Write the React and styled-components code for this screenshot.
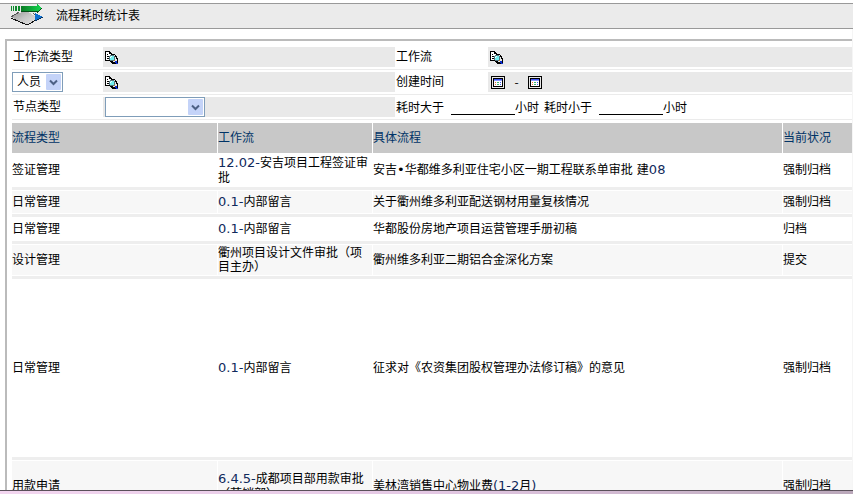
import React, { useState } from 'react';
import styled, { createGlobalStyle } from 'styled-components';

const GlobalStyle = createGlobalStyle`
  * {
    box-sizing: border-box;
  }

  body {
    margin: 0;
    background: #fff;
    color: #000;
    font: 12px/14px 'Noto Sans CJK SC', sans-serif;
  }
`;

const Page = styled.div`
  display: flex;
  flex-direction: column;
  height: 100vh;
  padding-top: 3px;
  overflow: hidden;
`;

const TitleBar = styled.header`
  display: flex;
  flex: none;
  align-items: center;
  gap: 12px;
  height: 26px;
  padding: 0 10px 2px;
  border-top: 1px solid #999;
  border-bottom: 1px solid #999;
  background: #ebebeb;
`;

const Title = styled.h1`
  margin: 0;
  font-size: 12px;
  font-weight: 400;
`;

const Content = styled.main`
  flex: 1;
  min-height: 0;
  padding: 10px 0 0 5px;
  border-right: 1px solid #f5f5f5;
  overflow: hidden;
`;

const Panel = styled.div`
  min-height: 100%;
  padding: 4px 0 0 4px;
  border-top: 2px solid #bbb;
  border-left: 2px solid #bbb;
`;

const FilterRow = styled.div`
  display: grid;
  grid-template-columns: 91px 292px 93px 1fr;
  margin-left: 1px;
  padding: 2px 0;
  border-bottom: 1px solid #ebebeb;
`;

const LabelCell = styled.div`
  display: flex;
  align-items: center;
  height: 20px;
  padding: 0 0 2px 1px;
`;

const PickerCell = styled.div`
  display: flex;
  align-items: center;
  height: 20px;
`;

const Field = styled.div`
  display: flex;
  align-items: center;
  height: 20px;
  padding-left: ${({ $inset }) => $inset || '2px'};
  background: #e9e9e9;
`;

const Range = styled.div`
  display: flex;
  grid-column: span 2;
  align-items: center;
  padding-left: 1px;
`;

const IconButton = styled.button`
  display: block;
  flex: none;
  padding: 0;
  border: 0;
  background: none;

  svg {
    display: block;
  }
`;

const Dash = styled.span`
  width: 23px;
  text-align: center;
`;

const SelectBox = styled.span`
  position: relative;
  display: block;
  width: ${({ $width }) => $width};
  height: 20px;

  svg {
    position: absolute;
    top: 2px;
    right: 2px;
    pointer-events: none;
  }
`;

const NativeSelect = styled.select`
  appearance: none;
  width: 100%;
  height: 20px;
  padding: 0 4px 2px;
  border: 1px solid #7f9db9;
  border-radius: 0;
  background: #fff;
  color: #000;
  font: inherit;
`;

const HourInput = styled.input`
  width: 64px;
  height: 16px;
  margin-left: 7px;
  padding: 0;
  border: 0;
  border-bottom: 1px solid #000;
  background: none;
  font: inherit;
`;

const HourUnit = styled.span`
  margin-right: 5px;
`;

const DataTable = styled.table`
  width: calc(100% + 1px);
  margin-top: 2px;
  border-spacing: 1px;
  table-layout: fixed;
`;

const Col = styled.col`
  width: ${({ $width }) => $width};
`;

const HeadCell = styled.th`
  height: 30px;
  padding: 0 0 2px;
  background: #c8c8c8;
  color: #003366;
  font-weight: 400;
  text-align: left;
`;

const DataRow = styled.tr`
  height: ${({ $height }) => $height};
  background: ${({ $shaded }) => ($shaded ? '#f7f7f7' : '#fff')};
`;

const DataCell = styled.td`
  padding: 0 0 2px;
`;

const RuleCell = styled.td`
  height: 3px;
  padding: 0;
  background: #eee;
`;

const Latin = styled.span`
  color: ${({ $symbol }) => ($symbol ? '#000' : '#102a5c')};
  font-family: 'DejaVu Sans', sans-serif;
  font-size: 13px;
  line-height: 14px;
`;

const StatusEdge = styled.footer`
  flex: none;
  height: 4px;
  border-top: 1px solid #5a505a;
  background: linear-gradient(90deg, #f3d6f0, #e4c8e4 50%, #baa8ba);
`;

const rows = [
  { type: '签证管理', flow: '12.02-安吉项目工程签证审批', detail: '安吉•华都维多利亚住宅小区一期工程联系单审批 建08', status: '强制归档', height: '32px' },
  { type: '日常管理', flow: '0.1-内部留言', detail: '关于衢州维多利亚配送钢材用量复核情况', status: '强制归档', height: '22px' },
  { type: '日常管理', flow: '0.1-内部留言', detail: '华都股份房地产项目运营管理手册初稿', status: '归档', height: '22px' },
  { type: '设计管理', flow: '衢州项目设计文件审批（项目主办）', detail: '衢州维多利亚二期铝合金深化方案', status: '提交', height: '30px' },
  { type: '日常管理', flow: '0.1-内部留言', detail: '征求对《农资集团股权管理办法修订稿》的意见', status: '强制归档', height: '176px' },
  { type: '用款申请', flow: '6.4.5-成都项目部用款审批（营销部）', detail: '美林湾销售中心物业费(1-2月)', status: '强制归档', height: '50px' },
];

// digits, ascii punctuation and the bullet are set in the latin face
const MixedText = ({ children }) =>
  children.split(/([0-9.()\s•-]+)/).map((part, i) =>
    i % 2 ? (
      <Latin key={i} $symbol={part === '•'}>
        {part}
      </Latin>
    ) : (
      part
    ),
  );

const FlowIcon = () => (
  <svg width="34" height="24" viewBox="0 0 34 24" shapeRendering="crispEdges" aria-hidden="true">
    <defs>
      <linearGradient id="plate" x1="0" y1="0" x2="1" y2="1">
        <stop offset="0" stopColor="#8c8c8c" />
        <stop offset="0.5" stopColor="#c4c4c4" />
        <stop offset="1" stopColor="#e8e8e8" />
      </linearGradient>
      <linearGradient id="arrow">
        <stop offset="0" stopColor="#0b7a25" />
        <stop offset="1" stopColor="#12d84e" />
      </linearGradient>
    </defs>
    <path d="M1 14 16 7 27 15 17 22Z" fill="url(#plate)" />
    <path d="M1 15 17 22 28 16" fill="none" stroke="#111" strokeWidth="1" />
    <path d="M1 14 9 9M23 10 29 15" fill="none" stroke="#555" strokeWidth="1" />
    <path d="M1 3h1v5H1zM3 3h1v5H3zM5 3h2v5H5zM8 3h2v5H8z" fill="#0d8a2c" />
    <path d="M11 3h16V1l5 4-5 5V8H11z" fill="url(#arrow)" />
    <path d="M11 8h16v2l5-5" fill="none" stroke="#064d18" />
    <path d="M25 10 33 14 25 18Z" fill="#0d6fd0" />
    <path d="M25 18 33 14" fill="none" stroke="#06305c" />
  </svg>
);

const LookupIcon = () => (
  <svg width="13" height="13" viewBox="0 0 13 13" shapeRendering="crispEdges" aria-hidden="true">
    <path d="M0 0h5v1h1v1h1v8H0z" fill="#000" />
    <path d="M1 1h3v2h2v6H1z" fill="#fff" />
    <path d="M2 3h1v1H2zM2 5h2v1H2zM2 7h2v1H2z" fill="#000" />
    <path d="M7 3h3v1h1v1h1v2h1v6H7v-1H6v-1H5v-1h2z" fill="#000" />
    <path d="M8 4h2v2h1v2h1v3H8z" fill="#e8e8e8" />
    <path d="M5 4h4v1h1v4H9v1H5V9H4V5h1z" fill="#55757d" />
    <path d="M5 5h4v4H5z" fill="#70f0f0" />
    <path d="M6 5h1v1H6zM5 6h1v1H5z" fill="#fff" />
    <path d="M9 9h1v1H9z" fill="#c08030" />
    <path d="M10 10h2v2h1v1h-2v-1h-1z" fill="#0a2cd0" />
  </svg>
);

const CalendarIcon = () => (
  <svg width="14" height="13" viewBox="0 0 14 13" shapeRendering="crispEdges" aria-hidden="true">
    <path d="M0 0h14v13H0z" fill="#000" />
    <path d="M1 1h12v11H1z" fill="#e9e9e9" />
    <path d="M2 2h10v9H2z" fill="#000" />
    <path d="M3 3h8v7H3z" fill="#fff" />
    <path d="M3 3h8v1H3z" fill="#3c50f0" />
    <path d="M3 4h8v1H3z" fill="#8c9cff" />
    <path d="M4 6h1v1H4zM4 8h1v1H4z" fill="#f07040" />
    <path d="M6 6h2v1H6zM6 8h2v1H6z" fill="#40b870" />
    <path d="M9 6h1v1H9zM9 8h1v1H9z" fill="#4060f0" />
  </svg>
);

const SelectArrow = () => (
  <svg width="15" height="16" viewBox="0 0 15 16" aria-hidden="true">
    <rect width="15" height="16" rx="1" fill="#c4d3f8" />
    <path d="M4 6.500 7.500 10 11 6.500" fill="none" stroke="#4d6185" strokeWidth="2" />
  </svg>
);

const Select = ({ width, label, id, children }) => (
  <SelectBox $width={width}>
    <NativeSelect id={id} aria-label={label}>
      {children}
    </NativeSelect>
    <SelectArrow />
  </SelectBox>
);

const Lookup = ({ label }) => (
  <IconButton type="button" aria-label={label}>
    <LookupIcon />
  </IconButton>
);

const Filters = () => {
  const [min, setMin] = useState('');
  const [max, setMax] = useState('');

  return (
    <form>
      <FilterRow>
        <LabelCell>工作流类型</LabelCell>
        <Field>
          <Lookup label="工作流类型" />
        </Field>
        <LabelCell>工作流</LabelCell>
        <Field>
          <Lookup label="工作流" />
        </Field>
      </FilterRow>
      <FilterRow>
        <PickerCell>
          <Select width="51px" label="人员">
            <option>人员</option>
          </Select>
        </PickerCell>
        <Field>
          <Lookup label="人员" />
        </Field>
        <LabelCell>创建时间</LabelCell>
        <Field $inset="3px">
          <IconButton type="button" aria-label="创建时间">
            <CalendarIcon />
          </IconButton>
          <Dash>-</Dash>
          <IconButton type="button" aria-label="创建时间">
            <CalendarIcon />
          </IconButton>
        </Field>
      </FilterRow>
      <FilterRow>
        <LabelCell as="label" htmlFor="nodeType">
          节点类型
        </LabelCell>
        <Field>
          <Select width="100px" id="nodeType">
            <option />
          </Select>
        </Field>
        <Range>
          <label htmlFor="minHours">耗时大于</label>
          <HourInput id="minHours" value={min} onChange={(e) => setMin(e.target.value)} />
          <HourUnit>小时</HourUnit>
          <label htmlFor="maxHours">耗时小于</label>
          <HourInput id="maxHours" value={max} onChange={(e) => setMax(e.target.value)} />
          <HourUnit>小时</HourUnit>
        </Range>
      </FilterRow>
    </form>
  );
};

const FlowTable = () => (
  <DataTable>
    <colgroup>
      <Col $width="205px" />
      <Col $width="154px" />
      <Col />
      <Col $width="69px" />
    </colgroup>
    <thead>
      <tr>
        <HeadCell>流程类型</HeadCell>
        <HeadCell>工作流</HeadCell>
        <HeadCell>具体流程</HeadCell>
        <HeadCell>当前状况</HeadCell>
      </tr>
    </thead>
    <tbody>
      {rows.map((row, i) => (
        <React.Fragment key={i}>
          <DataRow $height={row.height} $shaded={i % 2 === 1}>
            <DataCell>{row.type}</DataCell>
            <DataCell>
              <MixedText>{row.flow}</MixedText>
            </DataCell>
            <DataCell>
              <MixedText>{row.detail}</MixedText>
            </DataCell>
            <DataCell>{row.status}</DataCell>
          </DataRow>
          <tr>
            <RuleCell colSpan={4} />
          </tr>
        </React.Fragment>
      ))}
    </tbody>
  </DataTable>
);

const App = () => (
  <>
    <GlobalStyle />
    <Page>
      <TitleBar>
        <FlowIcon />
        <Title>流程耗时统计表</Title>
      </TitleBar>
      <Content>
        <Panel>
          <Filters />
          <FlowTable />
        </Panel>
      </Content>
      <StatusEdge />
    </Page>
  </>
);

export default App;
